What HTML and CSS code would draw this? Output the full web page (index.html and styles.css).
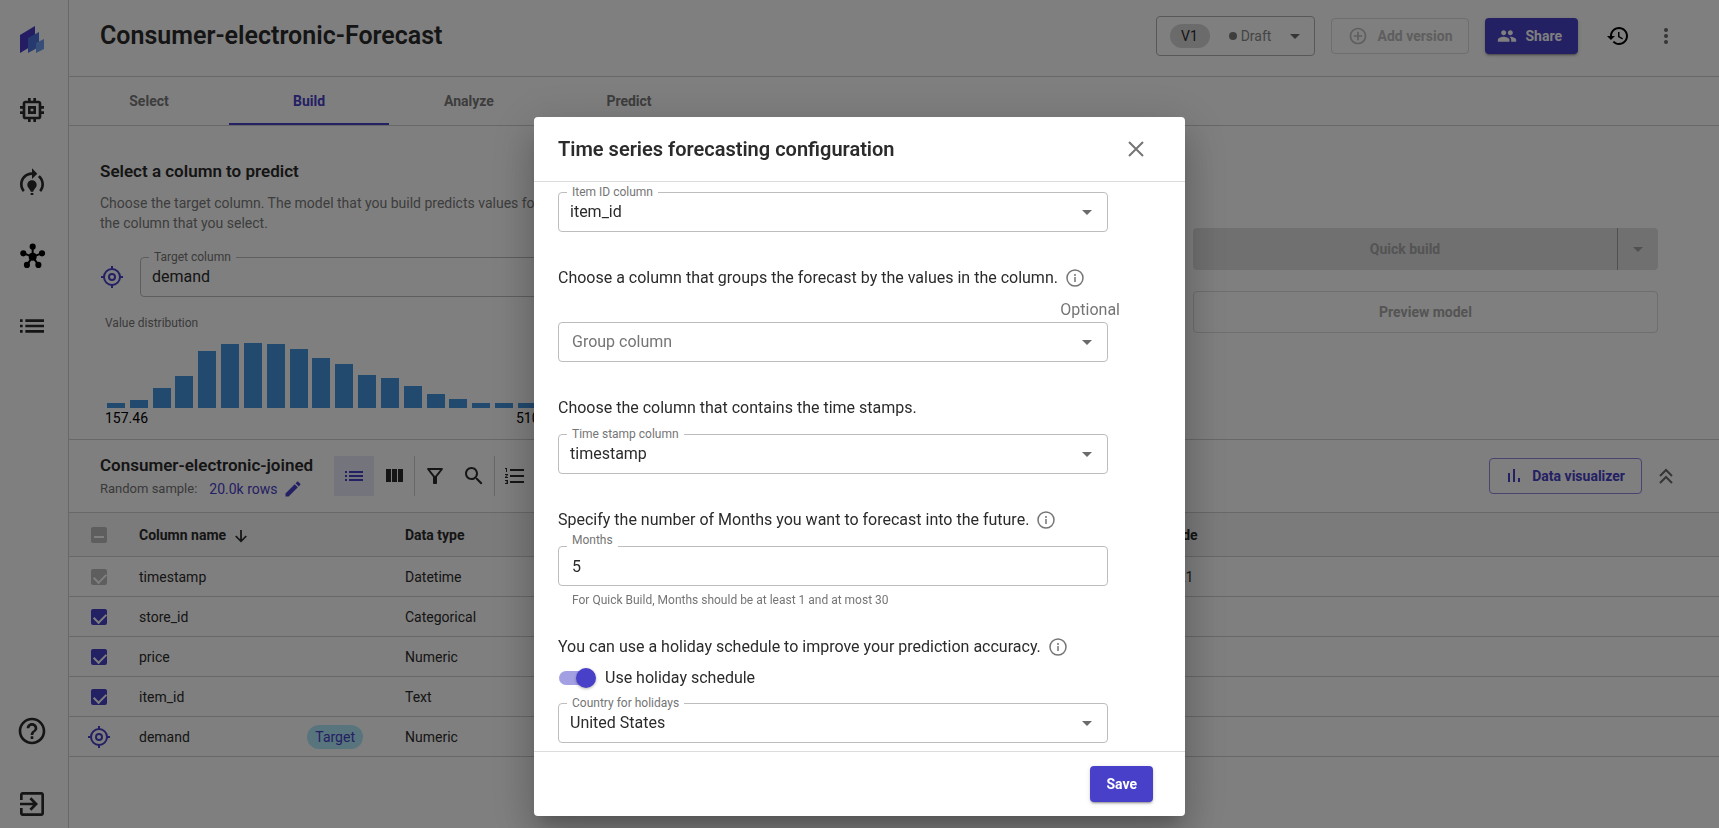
FILE: index.html
```html
<!DOCTYPE html>
<html lang="en">

<head>
    <meta charset="UTF-8">
    <meta name="viewport" content="width=device-width, initial-scale=1.0">
    <title>Consumer-electronic-Forecast</title>
    <link rel="stylesheet" href="styles.css">
</head>

<body>
    <div class="app">
        <nav class="sidebar">
            <a href="#" class="logo" aria-label="Home">
                <svg width="26" height="28" viewBox="0 0 26 28">
                    <path fill="#4b3bc9" d="M1 10l15-9v18L1 28z" />
                    <path fill="#4f74e0" d="M9 13l11-6v15L9 28z" />
                    <path fill="#6f9ff0" d="M17 18l8-4v10l-8 4z" />
                </svg>
            </a>
            <a href="#" aria-label="Ready-to-use models">
                <svg class="icon-lg" viewBox="0 0 24 24"><path d="M15 9H9v6h6V9zm-2 4h-2v-2h2v2zm8-2V9h-2V7c0-1.1-.9-2-2-2h-2V3h-2v2h-2V3H9v2H7c-1.1 0-2 .9-2 2v2H3v2h2v2H3v2h2v2c0 1.1.9 2 2 2h2v2h2v-2h2v2h2v-2h2c1.1 0 2-.9 2-2v-2h2v-2h-2v-2h2zm-4 6H7V7h10v10z" /></svg>
            </a>
            <a href="#" aria-label="My models">
                <svg class="icon-lg" viewBox="0 0 24 24"><path d="M15.5 13.5c0 2-2.5 3.5-2.5 5h-2c0-1.5-2.5-3-2.5-5 0-1.93 1.57-3.5 3.5-3.5s3.5 1.57 3.5 3.5zm-2.5 6h-2V21h2v-1.5zm6-6.5c0 1.68-.59 3.21-1.58 4.42l1.42 1.42C20.18 17.27 21 15.23 21 13c0-2.74-1.23-5.19-3.16-6.84l-1.42 1.42C17.99 8.86 19 10.82 19 13zm-3-8l-4-4v3c-4.97 0-9 4.03-9 9 0 2.23.82 4.27 2.16 5.84l1.42-1.42C5.59 16.21 5 14.68 5 13c0-3.86 3.14-7 7-7v3l4-4z" /></svg>
            </a>
            <a href="#" class="hub" aria-label="ML Ops">
                <svg class="icon-lg" viewBox="0 0 24 24">
                    <path d="M12.5 12.5V5M12.5 12.5L5.5 10M12.5 12.5l7-2.5M12.5 12.5L8 19M12.5 12.5L17 19" fill="none" stroke="currentColor" stroke-width="1.5" />
                    <circle cx="12.5" cy="12.5" r="3" />
                    <circle cx="12.5" cy="5" r="2.3" />
                    <circle cx="5.5" cy="10" r="2.3" />
                    <circle cx="19.5" cy="10" r="2.3" />
                    <circle cx="8.2" cy="18.7" r="2.3" />
                    <circle cx="16.8" cy="18.7" r="2.3" />
                </svg>
            </a>
            <a href="#" aria-label="Datasets">
                <svg class="icon-lg" viewBox="0 0 24 24"><path d="M3 13h2v-2H3v2zm0 4h2v-2H3v2zm0-8h2V7H3v2zm4 4h14v-2H7v2zm0 4h14v-2H7v2zM7 7v2h14V7H7z" /></svg>
            </a>
            <a href="#" class="push" aria-label="Help">
                <svg class="icon-lg" viewBox="0 0 24 24"><path d="M11 18h2v-2h-2v2zm1-16C6.48 2 2 6.48 2 12s4.48 10 10 10 10-4.48 10-10S17.52 2 12 2zm0 18c-4.41 0-8-3.59-8-8s3.59-8 8-8 8 3.59 8 8-3.59 8-8 8zm0-14c-2.21 0-4 1.79-4 4h2c0-1.1.9-2 2-2s2 .9 2 2c0 2-3 1.75-3 5h2c0-2.25 3-2.5 3-5 0-2.21-1.79-4-4-4z" /></svg>
            </a>
            <a href="#" aria-label="Log out">
                <svg class="icon-lg" viewBox="0 0 24 24"><path d="M10.09 15.59L11.5 17l5-5-5-5-1.41 1.41L12.67 11H3v2h9.67l-2.58 2.59zM19 3H5c-1.11 0-2 .9-2 2v4h2V5h14v14H5v-4H3v4c0 1.1.89 2 2 2h14c1.1 0 2-.9 2-2V5c0-1.1-.9-2-2-2z" /></svg>
            </a>
        </nav>

        <main class="main">
            <header class="topbar">
                <h1>Consumer-electronic-Forecast</h1>
                <div class="topbar-actions">
                    <button class="version-btn">
                        <span class="version-chip">V1</span>
                        <span class="version-status"><i class="dot"></i>Draft</span>
                        <i class="caret"></i>
                    </button>
                    <button class="btn btn-outline" disabled>
                        <svg class="icon-sm" viewBox="0 0 24 24"><path d="M13 7h-2v4H7v2h4v4h2v-4h4v-2h-4V7zm-1-5C6.48 2 2 6.48 2 12s4.48 10 10 10 10-4.48 10-10S17.52 2 12 2zm0 18c-4.41 0-8-3.59-8-8s3.59-8 8-8 8 3.59 8 8-3.59 8-8 8z" /></svg>
                        Add version
                    </button>
                    <button class="btn btn-primary">
                        <svg class="icon-sm" viewBox="0 0 24 24"><path d="M16 11c1.66 0 2.99-1.34 2.99-3S17.66 5 16 5c-1.66 0-3 1.34-3 3s1.34 3 3 3zm-8 0c1.66 0 2.99-1.34 2.99-3S9.66 5 8 5C6.34 5 5 6.34 5 8s1.34 3 3 3zm0 2c-2.33 0-7 1.17-7 3.5V19h14v-2.5c0-2.33-4.67-3.5-7-3.5zm8 0c-.29 0-.62.02-.97.05 1.16.84 1.97 1.97 1.97 3.45V19h6v-2.5c0-2.33-4.67-3.5-7-3.5z" /></svg>
                        Share
                    </button>
                    <button class="icon-btn history" aria-label="History">
                        <svg class="icon" viewBox="0 0 24 24"><path d="M13 3c-4.97 0-9 4.03-9 9H1l3.89 3.89.07.14L9 12H6c0-3.87 3.13-7 7-7s7 3.13 7 7-3.13 7-7 7c-1.93 0-3.68-.79-4.94-2.06l-1.42 1.42C8.27 19.99 10.51 21 13 21c4.97 0 9-4.03 9-9s-4.03-9-9-9zm-1 5v5l4.28 2.54.72-1.21-3.5-2.08V8H12z" /></svg>
                    </button>
                    <button class="icon-btn muted" aria-label="More">
                        <svg class="icon" viewBox="0 0 24 24"><circle cx="12" cy="6" r="2" /><circle cx="12" cy="12" r="2" /><circle cx="12" cy="18" r="2" /></svg>
                    </button>
                </div>
            </header>

            <div class="tabs">
                <a href="#" class="tab">Select</a>
                <a href="#" class="tab active">Build</a>
                <a href="#" class="tab">Analyze</a>
                <a href="#" class="tab">Predict</a>
            </div>

            <section class="build">
                <div class="build-target">
                    <h2>Select a column to predict</h2>
                    <p>Choose the target column. The model that you build predicts values for the column that you select.</p>
                    <div class="target-row">
                        <svg class="target-icon" viewBox="0 0 24 24">
                            <circle cx="12" cy="12" r="8" />
                            <circle cx="12" cy="12" r="3" />
                            <path d="M12 1v3M12 20v3M1 12h3M20 12h3" />
                        </svg>
                        <div class="field">
                            <label for="target">Target column</label>
                            <select id="target">
                                <option>demand</option>
                            </select>
                        </div>
                    </div>
                    <div class="chart">
                        <div class="chart-title">Value distribution</div>
                        <div class="bars">
                            <span style="height: 5px"></span>
                            <span style="height: 8px"></span>
                            <span style="height: 20px"></span>
                            <span style="height: 32px"></span>
                            <span style="height: 57px"></span>
                            <span style="height: 64px"></span>
                            <span style="height: 65px"></span>
                            <span style="height: 64px"></span>
                            <span style="height: 59px"></span>
                            <span style="height: 50px"></span>
                            <span style="height: 44px"></span>
                            <span style="height: 33px"></span>
                            <span style="height: 30px"></span>
                            <span style="height: 22px"></span>
                            <span style="height: 14px"></span>
                            <span style="height: 9px"></span>
                            <span style="height: 5px"></span>
                            <span style="height: 5px"></span>
                            <span style="height: 5px"></span>
                            <span style="height: 5px"></span>
                        </div>
                        <div class="chart-axis"><span>157.46</span><span>510.28</span></div>
                    </div>
                </div>
                <div class="build-actions">
                    <div class="split-btn">
                        <button disabled>Quick build</button>
                        <button class="split-toggle" aria-label="Build options" disabled><i class="caret"></i></button>
                    </div>
                    <button class="preview-btn" disabled>Preview model</button>
                </div>
            </section>

            <section class="toolbar">
                <div class="dataset">
                    <h2>Consumer-electronic-joined</h2>
                    <div class="sample">
                        <span>Random sample:</span>
                        <a href="#">20.0k rows
                            <svg class="icon-sm" viewBox="0 0 24 24"><path d="M3 17.25V21h3.75L17.81 9.94l-3.75-3.75L3 17.25zM20.71 7.04c.39-.39.39-1.02 0-1.41l-2.34-2.34c-.39-.39-1.02-.39-1.41 0l-1.83 1.83 3.75 3.75 1.83-1.83z" /></svg>
                        </a>
                    </div>
                </div>
                <div class="tools">
                    <button class="tool selected" aria-label="List view">
                        <svg class="icon" viewBox="0 0 24 24"><path d="M3 13h2v-2H3v2zm0 4h2v-2H3v2zm0-8h2V7H3v2zm4 4h14v-2H7v2zm0 4h14v-2H7v2zM7 7v2h14V7H7z" /></svg>
                    </button>
                    <button class="tool" aria-label="Column view">
                        <svg class="icon" viewBox="0 0 24 24"><path d="M10 18h5V5h-5v13zm-6 0h5V5H4v13zM16 5v13h5V5h-5z" /></svg>
                    </button>
                    <button class="tool divided" aria-label="Filter">
                        <svg class="icon" viewBox="0 0 24 24"><path d="M7 6h10l-5.01 6.3L7 6zm-2.75-.39C6.27 8.2 10 13 10 13v6c0 .55.45 1 1 1h2c.55 0 1-.45 1-1v-6s3.72-4.8 5.74-7.39c.51-.66.04-1.61-.79-1.61H5.04c-.83 0-1.3.95-.79 1.61z" /></svg>
                    </button>
                    <button class="tool" aria-label="Search">
                        <svg class="icon" viewBox="0 0 24 24"><path d="M15.5 14h-.79l-.28-.27C15.41 12.59 16 11.11 16 9.5 16 5.91 13.09 3 9.5 3S3 5.91 3 9.5 5.91 16 9.5 16c1.61 0 3.09-.59 4.23-1.57l.27.28v.79l5 4.99L20.49 19l-4.99-5zm-6 0C7.01 14 5 11.99 5 9.5S7.01 5 9.5 5 14 7.01 14 9.5 11.99 14 9.5 14z" /></svg>
                    </button>
                    <button class="tool divided" aria-label="Model recipe">
                        <svg class="icon" viewBox="0 0 24 24"><path d="M2 17h2v.5H3v1h1v.5H2v1h3v-4H2v1zm1-9h1V4H2v1h1v3zm-1 3h1.8L2 13.1v.9h3v-1H3.2L5 10.9V10H2v1zm5-6v2h14V5H7zm0 14h14v-2H7v2zm0-6h14v-2H7v2z" /></svg>
                    </button>
                </div>
                <button class="btn visualizer-btn">
                    <svg class="icon-bars" viewBox="0 0 16 16"><path d="M2 5h2v9H2zM7 1h2v13H7zM12 10h2v4h-2z" /></svg>
                    Data visualizer
                </button>
                <button class="icon-btn muted" aria-label="Collapse">
                    <svg class="icon" viewBox="0 0 24 24"><path d="M6 12l6-6 6 6M6 19l6-6 6 6" fill="none" stroke="currentColor" stroke-width="2" /></svg>
                </button>
            </section>

            <table class="columns">
                <thead>
                    <tr>
                        <th class="check"><input type="checkbox" class="partial" aria-label="All columns" disabled></th>
                        <th class="name">Column name
                            <svg class="sort" viewBox="0 0 16 16"><path d="M8 1v13M2 8l6 6 6-6" fill="none" stroke="currentColor" stroke-width="2" /></svg>
                        </th>
                        <th class="type">Data type</th>
                        <th>Mode</th>
                    </tr>
                </thead>
                <tbody>
                    <tr>
                        <td class="check"><input type="checkbox" aria-label="timestamp" checked disabled></td>
                        <td>timestamp</td>
                        <td>Datetime</td>
                        <td>2021</td>
                    </tr>
                    <tr>
                        <td class="check"><input type="checkbox" aria-label="store_id" checked></td>
                        <td>store_id</td>
                        <td>Categorical</td>
                        <td></td>
                    </tr>
                    <tr>
                        <td class="check"><input type="checkbox" aria-label="price" checked></td>
                        <td>price</td>
                        <td>Numeric</td>
                        <td></td>
                    </tr>
                    <tr>
                        <td class="check"><input type="checkbox" aria-label="item_id" checked></td>
                        <td>item_id</td>
                        <td>Text</td>
                        <td></td>
                    </tr>
                    <tr>
                        <td class="check">
                            <svg class="target-icon" viewBox="0 0 24 24">
                                <circle cx="12" cy="12" r="8" />
                                <circle cx="12" cy="12" r="3" />
                                <path d="M12 1v3M12 20v3M1 12h3M20 12h3" />
                            </svg>
                        </td>
                        <td>
                            <div class="name-cell">demand <span class="target-chip">Target</span></div>
                        </td>
                        <td>Numeric</td>
                        <td></td>
                    </tr>
                </tbody>
            </table>
        </main>
    </div>

    <div class="backdrop">
        <form class="dialog" role="dialog" aria-labelledby="dialogTitle">
            <div class="dialog-header">
                <h2 id="dialogTitle">Time series forecasting configuration</h2>
                <button type="button" class="close-btn" aria-label="Close">
                    <svg width="16" height="16" viewBox="0 0 16 16"><path d="M1 1l14 14M15 1L1 15" fill="none" stroke="currentColor" stroke-width="2" /></svg>
                </button>
            </div>

            <div class="dialog-body">
                <div class="field">
                    <label for="itemId">Item ID column</label>
                    <select id="itemId">
                        <option>item_id</option>
                    </select>
                    <i class="caret"></i>
                </div>

                <div class="group">
                    <p class="question">Choose a column that groups the forecast by the values in the column.
                        <svg class="info" viewBox="0 0 18 18"><circle cx="9" cy="9" r="8" /><path d="M9 8v5M9 5v2" /></svg>
                    </p>
                    <div class="optional">Optional</div>
                    <div class="field placeholder">
                        <select id="groupColumn" aria-label="Group column">
                            <option>Group column</option>
                        </select>
                        <i class="caret"></i>
                    </div>
                </div>

                <div class="group">
                    <p class="question">Choose the column that contains the time stamps.</p>
                    <div class="field spaced">
                        <label for="timeStamp">Time stamp column</label>
                        <select id="timeStamp">
                            <option>timestamp</option>
                        </select>
                        <i class="caret"></i>
                    </div>
                </div>

                <div class="group">
                    <p class="question">Specify the number of Months you want to forecast into the future.
                        <svg class="info" viewBox="0 0 18 18"><circle cx="9" cy="9" r="8" /><path d="M9 8v5M9 5v2" /></svg>
                    </p>
                    <div class="field text-field spaced">
                        <label for="months">Months</label>
                        <input type="text" id="months" value="5">
                    </div>
                    <div class="helper">For Quick Build, Months should be at least 1 and at most 30</div>
                </div>

                <div class="group holidays">
                    <p class="question">You can use a holiday schedule to improve your prediction accuracy.
                        <svg class="info" viewBox="0 0 18 18"><circle cx="9" cy="9" r="8" /><path d="M9 8v5M9 5v2" /></svg>
                    </p>
                    <label class="switch">
                        <input type="checkbox" checked>
                        Use holiday schedule
                    </label>
                    <div class="field">
                        <label for="country">Country for holidays</label>
                        <select id="country">
                            <option>United States</option>
                        </select>
                        <i class="caret"></i>
                    </div>
                </div>
            </div>

            <div class="dialog-footer">
                <button type="submit" class="btn btn-primary save-btn">Save</button>
            </div>
        </form>
    </div>
</body>

</html>
```
FILE: styles.css
```css
* {
    margin: 0;
    padding: 0;
    box-sizing: border-box;
}

body {
    font-family: Roboto, 'Noto Sans', sans-serif;
    font-size: 14px;
    line-height: 20px;
    color: #2b2b2b;
    background: #fff;
    overflow: hidden;
}

button,
input,
select {
    font: inherit;
    color: inherit;
    background: none;
    border: none;
}

a {
    color: inherit;
    text-decoration: none;
}

svg {
    display: block;
    fill: currentColor;
    flex-shrink: 0;
}

.icon-lg {
    width: 32px;
    height: 32px;
}

.icon {
    width: 24px;
    height: 24px;
}

.icon-sm {
    width: 20px;
    height: 20px;
}

.icon-bars {
    width: 16px;
    height: 16px;
}

.caret {
    width: 0;
    height: 0;
    border: 5px solid transparent;
    border-top-color: #6b6b6b;
    border-bottom: none;
}

.app {
    display: flex;
    height: 100vh;
}

/* Sidebar */
.sidebar {
    width: 69px;
    flex-shrink: 0;
    border-right: 1px solid #d0d0d0;
    padding: 25px 5px 8px 0;
    display: flex;
    flex-direction: column;
    align-items: center;
    gap: 41px;
}

.hub {
    margin-bottom: -3px;
    color: #000;
}

.push {
    margin-top: auto;
}

.main {
    flex: 1;
    min-width: 0;
}

/* Top bar */
.topbar {
    height: 77px;
    padding: 0 41px 4px 31px;
    border-bottom: 1px solid #d0d0d0;
    display: flex;
    justify-content: space-between;
    align-items: center;
}

h1 {
    font-size: 25px;
    line-height: 32px;
    font-weight: 600;
}

.topbar-actions {
    display: flex;
    align-items: center;
    gap: 16px;
}

.btn {
    height: 36px;
    padding: 0 16px;
    border-radius: 4px;
    font-weight: 700;
    display: flex;
    align-items: center;
    gap: 10px;
}

.btn-outline {
    border: 1px solid #dcdcdc;
    color: #bdbdbd;
}

.btn-primary {
    background: #4840c8;
    color: #fff;
    padding: 0 16px 0 12px;
    gap: 8px;
    box-shadow: 0 3px 1px -2px rgba(0, 0, 0, 0.2), 0 2px 2px rgba(0, 0, 0, 0.14), 0 1px 5px rgba(0, 0, 0, 0.12);
}

.version-btn {
    height: 40px;
    width: 159px;
    padding: 0 13px;
    border: 1px solid #b0b0b0;
    border-radius: 4px;
    display: flex;
    align-items: center;
    justify-content: space-between;
}

.version-chip {
    width: 40px;
    height: 24px;
    line-height: 24px;
    border-radius: 12px;
    background: #d6d6d6;
}

.version-status {
    color: #8a8a8a;
    display: flex;
    align-items: center;
    gap: 4px;
}

.dot {
    width: 8px;
    height: 8px;
    border-radius: 50%;
    background: #7d7d7d;
}

.icon-btn {
    width: 24px;
    height: 24px;
}

.history {
    color: #000;
    margin: 0 8px 0 12px;
}

.muted {
    color: #6b6b6b;
}

/* Tabs */
.tabs {
    display: flex;
    height: 49px;
    border-bottom: 1px solid #d0d0d0;
}

.tab {
    width: 160px;
    line-height: 48px;
    text-align: center;
    font-weight: 700;
    color: #7a7a7a;
}

.tab.active {
    color: #4840c8;
    box-shadow: inset 0 -2px #4840c8;
}

/* Build section */
.build {
    display: flex;
    justify-content: space-between;
    padding: 33px 61px 12px 31px;
    height: 314px;
    border-bottom: 1px solid #d0d0d0;
}

.build-target {
    width: 480px;
}

h2 {
    font-size: 17px;
    line-height: 24px;
    font-weight: 600;
}

.build-target p {
    margin: 10px 0 24px;
    color: #7a7a7a;
    width: 460px;
}

.target-row {
    display: flex;
    align-items: center;
    gap: 16px;
}

.target-icon {
    width: 24px;
    height: 24px;
    fill: none;
    stroke: #4840c8;
    stroke-width: 2;
}

.field {
    position: relative;
    width: 550px;
    height: 40px;
    border: 1px solid #bdbdbd;
    border-radius: 4px;
}

.target-row .field {
    width: auto;
    flex: 1;
}

.field label {
    position: absolute;
    top: -9px;
    left: 8px;
    padding: 0 5px;
    background: #fff;
    font-size: 12px;
    line-height: 16px;
    color: #757575;
}

.field select,
.field input {
    display: block;
    width: 100%;
    height: 38px;
    padding: 0 11px;
    font-size: 16px;
    appearance: none;
    outline: none;
}

.field input {
    padding: 0 13px;
}

.text-field label {
    top: -15px;
}

.field .caret {
    position: absolute;
    right: 15px;
    top: 17px;
    pointer-events: none;
}

.placeholder select {
    padding: 0 13px;
    color: #757575;
}

.chart {
    padding: 16px 0 0 5px;
}

.chart-title {
    font-size: 12px;
    color: #757575;
}

.bars {
    height: 75px;
    padding-left: 2px;
    display: grid;
    grid-template-columns: repeat(20, 18px);
    justify-content: space-between;
    align-items: end;
    width: 454px;
}

.bars span {
    background: #4494dc;
}

.chart-axis {
    display: flex;
    justify-content: space-between;
    width: 454px;
    color: #000;
}

.build-actions {
    width: 465px;
    padding-top: 69px;
    display: flex;
    flex-direction: column;
    gap: 21px;
}

.split-btn {
    display: flex;
    height: 42px;
    border-radius: 4px;
    background: #e0e0e0;
    color: #a8a8a8;
}

.split-btn button {
    flex: 1;
    font-weight: 700;
}

.split-btn .split-toggle {
    flex: 0 0 41px;
    border-left: 1px solid #a0a0a0;
    display: flex;
    align-items: center;
    justify-content: center;
}

.split-btn .caret {
    border-top-color: #a0a0a0;
}

.preview-btn {
    height: 42px;
    border: 1px solid #dcdcdc;
    border-radius: 4px;
    font-weight: 700;
    color: #a8a8a8;
}

/* Dataset toolbar */
.toolbar {
    height: 72px;
    padding: 0 41px 0 31px;
    display: flex;
    align-items: center;
}

.dataset {
    width: 234px;
}

.sample {
    display: flex;
    gap: 12px;
    margin-top: 2px;
    font-size: 13px;
    color: #757575;
}

.sample a {
    display: flex;
    gap: 5px;
    font-size: 14px;
    color: #4840c8;
}

.tools {
    display: flex;
    flex: 1;
}

.tool {
    width: 40px;
    height: 40px;
    padding: 0 8px;
}

.tool.selected {
    background: #e8e8fb;
    color: #4840c8;
}

.tool.divided {
    border-left: 1px solid #d0d0d0;
}

.visualizer-btn {
    border: 1px solid #8f8be0;
    color: #4840c8;
    margin-right: 12px;
    padding: 0 16px;
}

/* Columns table */
.columns {
    width: 100%;
    border-collapse: collapse;
    table-layout: fixed;
}

.columns th,
.columns td {
    height: 40px;
    text-align: left;
    border-bottom: 1px solid #d0d0d0;
}

.columns th {
    height: 44px;
    background: #f6f6f6;
    border-top: 1px solid #d0d0d0;
}

.columns .check {
    width: 70px;
    padding-left: 22px;
}

.columns td .target-icon {
    margin-left: -4px;
}

.columns .name {
    width: 266px;
}

.columns .type {
    width: 757px;
}

.sort {
    display: inline-block;
    width: 14px;
    height: 14px;
    margin-left: 4px;
    vertical-align: middle;
}

.check input {
    display: block;
    width: 16px;
    height: 16px;
    border-radius: 2px;
    background: #4840c8;
    appearance: none;
    position: relative;
}

.check input:disabled {
    background: #bdbdbd;
}

.check input::after {
    content: '';
    position: absolute;
    left: 5px;
    top: 2px;
    width: 6px;
    height: 10px;
    border: solid #fff;
    border-width: 0 2px 2px 0;
    transform: rotate(45deg);
}

.check .partial::after {
    left: 3px;
    top: 7px;
    width: 10px;
    height: 2px;
    border-width: 0 0 2px;
    transform: none;
}

.name-cell {
    display: flex;
    align-items: center;
    justify-content: space-between;
    padding-right: 42px;
}

.target-chip {
    height: 24px;
    line-height: 24px;
    padding: 0 8px;
    border-radius: 12px;
    background: #b0e9fb;
    color: #4840c8;
}

/* Dialog */
.backdrop {
    position: fixed;
    inset: 0;
    padding-top: 117px;
    background: rgba(0, 0, 0, 0.5);
    display: flex;
    justify-content: center;
    align-items: flex-start;
}

.dialog {
    width: 651px;
    background: #fff;
    border-radius: 4px;
    box-shadow: 0 11px 15px -7px rgba(0, 0, 0, 0.2), 0 24px 38px 3px rgba(0, 0, 0, 0.14), 0 9px 46px 8px rgba(0, 0, 0, 0.12);
}

.dialog-header {
    height: 65px;
    padding: 0 41px 0 24px;
    border-bottom: 1px solid #dcdcdc;
    display: flex;
    justify-content: space-between;
    align-items: center;
}

.dialog-header h2 {
    font-size: 20px;
}

.close-btn {
    width: 16px;
    height: 16px;
    color: #757575;
}

.dialog-body {
    padding: 10px 24px 8px;
}

.group {
    margin-top: 34px;
}

.question {
    display: flex;
    align-items: center;
    gap: 8px;
    font-size: 16px;
    line-height: 24px;
}

.info {
    width: 18px;
    height: 18px;
    fill: none;
    stroke: #757575;
    stroke-width: 1.5;
}

.optional {
    width: 562px;
    margin-top: 8px;
    text-align: right;
    font-size: 16px;
    line-height: 24px;
    color: #757575;
}

.spaced {
    margin-top: 14px;
}

.helper {
    padding: 6px 14px 0;
    font-size: 12px;
    line-height: 16px;
    color: #757575;
}

.holidays {
    margin-top: 27px;
}

.switch {
    display: flex;
    align-items: center;
    gap: 10px;
    margin: 7px 0 13px;
    font-size: 16px;
    line-height: 24px;
}

.switch input {
    position: relative;
    width: 36px;
    height: 14px;
    margin-left: 1px;
    border-radius: 7px;
    background: #a39fe3;
    appearance: none;
}

.switch input::after {
    content: '';
    position: absolute;
    right: -1px;
    top: -3px;
    width: 20px;
    height: 20px;
    border-radius: 50%;
    background: #4840c8;
    box-shadow: 0 1px 3px rgba(0, 0, 0, 0.3);
}

.dialog-footer {
    height: 65px;
    padding: 0 32px;
    border-top: 1px solid #dcdcdc;
    display: flex;
    justify-content: flex-end;
    align-items: center;
}

.save-btn {
    padding: 0 16px;
}
```
